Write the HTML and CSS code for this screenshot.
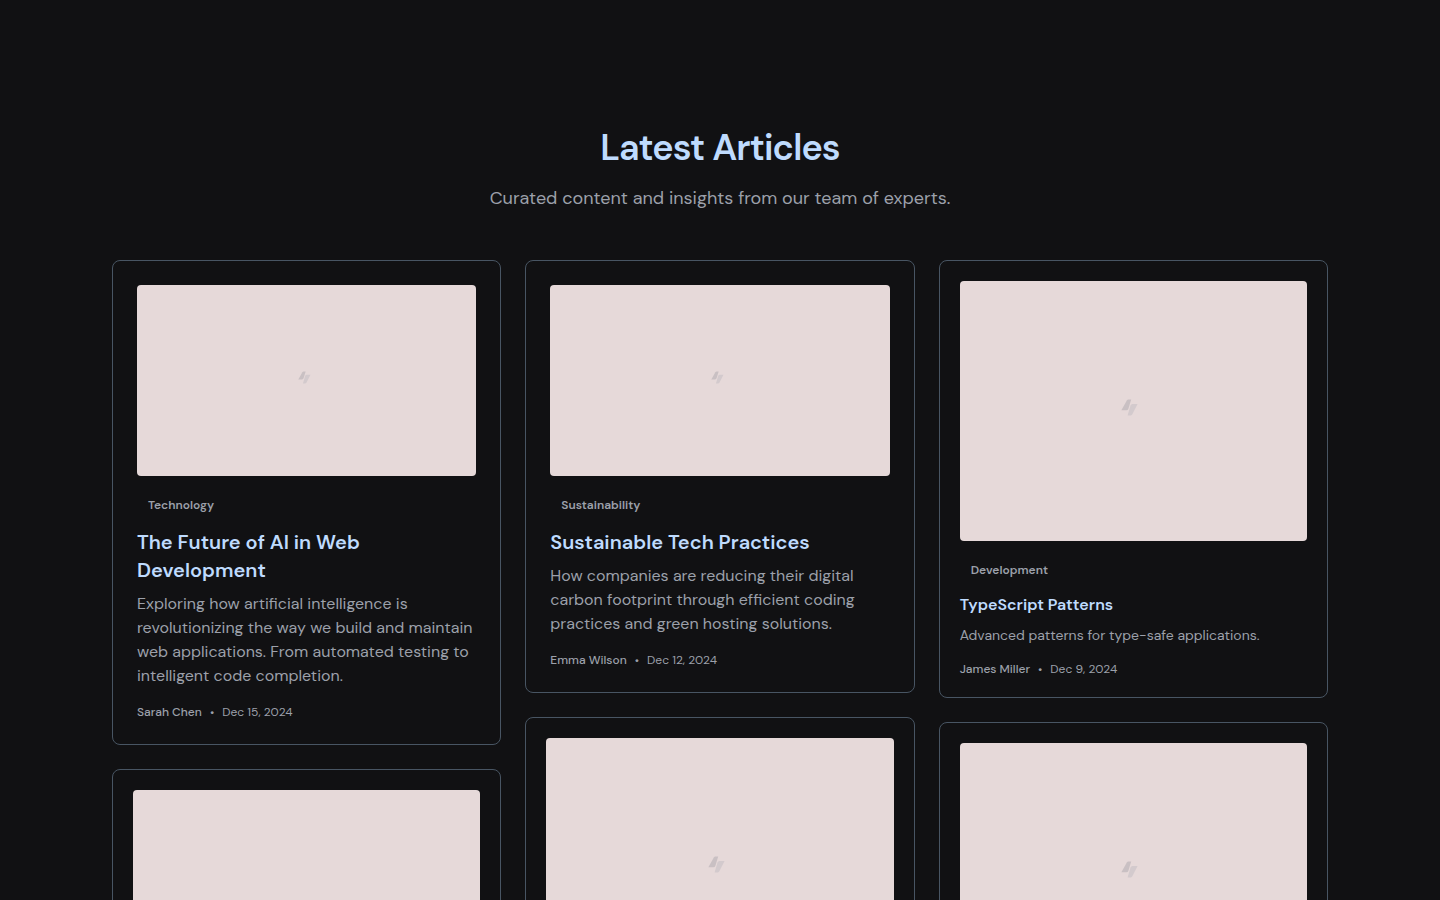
FILE: index.html
```
<!DOCTYPE html>
<html lang="en">
  <head>
    <meta charset="utf-8" />
    <meta name="viewport" content="width=device-width, initial-scale=1" />
    <title>Latest Articles</title>
    <link rel="stylesheet" href="styles.css">
  </head>
  <body>
    <svg class="sprite" aria-hidden="true">
      <symbol id="mark" viewBox="0 0 24 24">
        <path fill="#c9c0c3" d="M7.4 0.6h2.8L7.4 9.8Q6.9 11.3 5.4 11.3H0.4L5.8 1.6Q6.4 0.6 7.4 0.6z" />
        <path fill="#d3cacd" d="M11.4 5h5.2L11.2 15.5Q10.6 16.5 9.4 16.5H6.6L9.5 6.5Q10 5 11.4 5z" />
      </symbol>
    </svg>
    <section class="articles">
      <div class="articles-header">
        <h1>Latest Articles</h1>
        <p>Curated content and insights from our team of experts.</p>
      </div>
      <div class="articles-grid">
        <div class="column">
          <article class="card card-large">
            <div class="card-image">
              <svg><use href="#mark" /></svg>
            </div>
            <span class="badge">Technology</span>
            <h2>The Future of AI in Web Development</h2>
            <p>Exploring how artificial intelligence is revolutionizing the way we build and maintain web applications. From automated testing to intelligent code completion.</p>
            <div class="card-meta">
              <span class="author">Sarah Chen</span>
              <span>•</span>
              <time datetime="2024-12-15">Dec 15, 2024</time>
            </div>
          </article>
          <article class="card">
            <div class="card-image">
              <svg><use href="#mark" /></svg>
            </div>
          </article>
        </div>
        <div class="column">
          <article class="card card-large">
            <div class="card-image">
              <svg><use href="#mark" /></svg>
            </div>
            <span class="badge">Sustainability</span>
            <h2>Sustainable Tech Practices</h2>
            <p>How companies are reducing their digital carbon footprint through efficient coding practices and green hosting solutions.</p>
            <div class="card-meta">
              <span class="author">Emma Wilson</span>
              <span>•</span>
              <time datetime="2024-12-12">Dec 12, 2024</time>
            </div>
          </article>
          <article class="card">
            <div class="card-image">
              <svg><use href="#mark" /></svg>
            </div>
          </article>
        </div>
        <div class="column">
          <article class="card">
            <div class="card-image">
              <svg><use href="#mark" /></svg>
            </div>
            <span class="badge">Development</span>
            <h2>TypeScript Patterns</h2>
            <p>Advanced patterns for type-safe applications.</p>
            <div class="card-meta">
              <span class="author">James Miller</span>
              <span>•</span>
              <time datetime="2024-12-09">Dec 9, 2024</time>
            </div>
          </article>
          <article class="card">
            <div class="card-image">
              <svg><use href="#mark" /></svg>
            </div>
          </article>
        </div>
      </div>
    </section>
  </body>
</html>
```
FILE: styles.css
```
* {
  box-sizing: border-box;
}

body,
h1,
h2,
p {
  margin: 0;
}

body {
  background-color: #111113;
  color: #9ca0aa;
  font-family: "DM Sans", Inter, "Liberation Sans", sans-serif;
}

.sprite {
  display: none;
}

.articles {
  max-width: 1280px;
  margin: 0 auto;
  padding: 128px 32px;
}

.articles-header {
  text-align: center;
  margin-bottom: 48px;
}
.articles-header h1 {
  font-size: 36px;
  line-height: 40px;
  font-weight: 600;
  letter-spacing: -0.025em;
  color: #bfdbfe;
  margin-bottom: 16px;
}
.articles-header p {
  font-size: 18px;
  line-height: 28px;
}

.articles-grid {
  display: grid;
  grid-template-columns: repeat(3, 1fr);
  gap: 24px;
}
.column {
  display: flex;
  flex-direction: column;
  gap: 24px;
}

.card {
  border: 1px solid #485563;
  border-radius: 8px;
  padding: 20px;
}
.card-large {
  padding: 24px;
}

.card-image {
  display: flex;
  align-items: center;
  justify-content: center;
  height: 260px;
  margin-bottom: 16px;
  border-radius: 4px;
  background-color: #e6d9d9;
}
.card-image svg {
  width: 24px;
  height: 24px;
}
.card-large .card-image {
  height: auto;
  aspect-ratio: 16 / 9;
}
.card-large .card-image svg {
  width: 18px;
  height: 18px;
}

.badge {
  display: block;
  width: fit-content;
  margin-bottom: 10px;
  padding: 4px 10px;
  border: 1px solid transparent;
  font-size: 12px;
  line-height: 16px;
  font-weight: 600;
}

.card h2 {
  margin-bottom: 8px;
  font-size: 16px;
  line-height: 24px;
  font-weight: 600;
  color: #bfdbfe;
}
.card p {
  margin-bottom: 16px;
  font-size: 14px;
  line-height: 20px;
}
.card-large h2 {
  font-size: 20px;
  line-height: 28px;
}
.card-large p {
  font-size: 16px;
  line-height: 24px;
}

.card-meta {
  display: flex;
  gap: 8px;
  font-size: 12px;
  line-height: 16px;
}
.card-meta .author {
  font-weight: 500;
}
```
